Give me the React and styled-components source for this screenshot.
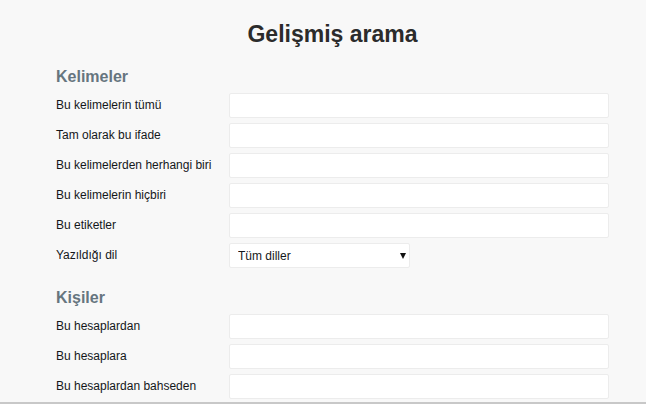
import styled, { createGlobalStyle } from "styled-components";

const GlobalStyle = createGlobalStyle`
  html, body {
    margin: 0;
    padding: 0;
    background: #f8f8f8;
    font-family: "Liberation Sans", Arial, sans-serif;
  }
  * { box-sizing: border-box; }
`;

const Page = styled.div`
  height: 404px;
  overflow: hidden;
  border-bottom: 2px solid #c8c8c8;
  padding: 21px 0 0 56px;
`;

const Title = styled.h1`
  margin: 0 0 20px -56px;
  font-size: 23px;
  line-height: 26px;
  font-weight: bold;
  color: #2b2b2b;
  text-align: center;
  padding-left: 19px;
`;

const Section = styled.section`
  margin-bottom: 20px;
`;

const Heading = styled.h2`
  margin: 0 0 6px;
  font-size: 16px;
  line-height: 20px;
  font-weight: bold;
  color: #66757f;
`;

const Rows = styled.div`
  display: flex;
  flex-direction: column;
  gap: 5px;
`;

const Row = styled.label`
  display: grid;
  grid-template-columns: 173px auto;
  align-items: center;
  height: 25px;
`;

const LabelText = styled.span`
  font-size: 12px;
  color: #14171a;
  margin-top: -2px;
`;

const TextInput = styled.input`
  width: 380px;
  height: 25px;
  margin: 0;
  padding: 0 8px;
  background: #fff;
  border: 1px solid #ececec;
  border-radius: 2px;
  font: 12px "Liberation Sans", Arial, sans-serif;
  outline: none;
`;

const SelectWrap = styled.div`
  position: relative;
  width: 181px;
  height: 25px;

  &::after {
    content: "";
    position: absolute;
    right: 4px;
    top: 10px;
    border-left: 3px solid transparent;
    border-right: 3px solid transparent;
    border-top: 6px solid #111;
    pointer-events: none;
  }
`;

const Select = styled.select`
  appearance: none;
  -webkit-appearance: none;
  width: 100%;
  height: 100%;
  margin: 0;
  padding: 0 8px;
  background: #fff;
  border: 1px solid #ececec;
  border-radius: 2px;
  font: 12px "Liberation Sans", Arial, sans-serif;
  color: #14171a;
  outline: none;
`;

const wordFields = [
  "Bu kelimelerin tümü",
  "Tam olarak bu ifade",
  "Bu kelimelerden herhangi biri",
  "Bu kelimelerin hiçbiri",
  "Bu etiketler",
];

const peopleFields = [
  "Bu hesaplardan",
  "Bu hesaplara",
  "Bu hesaplardan bahseden",
];

function Field({ label }) {
  return (
    <Row>
      <LabelText>{label}</LabelText>
      <TextInput type="text" />
    </Row>
  );
}

export default function App() {
  return (
    <>
      <GlobalStyle />
      <Page>
        <Title>Gelişmiş arama</Title>
        <Section>
          <Heading>Kelimeler</Heading>
          <Rows>
            {wordFields.map((f) => (
              <Field key={f} label={f} />
            ))}
            <Row>
              <LabelText>Yazıldığı dil</LabelText>
              <SelectWrap>
                <Select defaultValue="all">
                  <option value="all">Tüm diller</option>
                  <option value="tr">Türkçe</option>
                  <option value="en">İngilizce</option>
                </Select>
              </SelectWrap>
            </Row>
          </Rows>
        </Section>
        <Section>
          <Heading>Kişiler</Heading>
          <Rows>
            {peopleFields.map((f) => (
              <Field key={f} label={f} />
            ))}
          </Rows>
        </Section>
      </Page>
    </>
  );
}
